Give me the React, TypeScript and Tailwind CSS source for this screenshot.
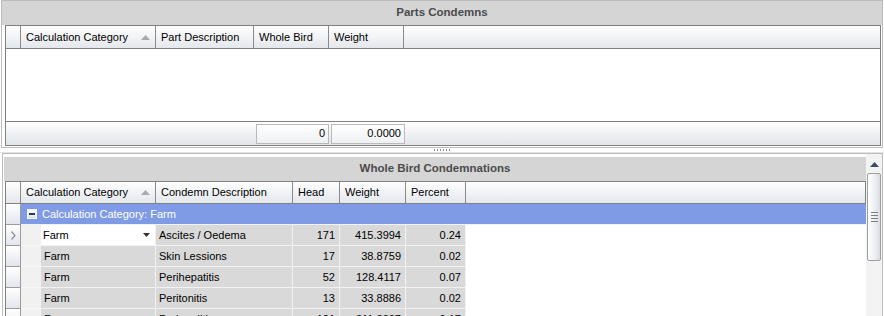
import React from "react";

type Row = { cat: string; desc: string; head: number; weight: string; pct: string };

const rows: Row[] = [
  { cat: "Farm", desc: "Ascites / Oedema", head: 171, weight: "415.3994", pct: "0.24" },
  { cat: "Farm", desc: "Skin Lessions", head: 17, weight: "38.8759", pct: "0.02" },
  { cat: "Farm", desc: "Perihepatitis", head: 52, weight: "128.4117", pct: "0.07" },
  { cat: "Farm", desc: "Peritonitis", head: 13, weight: "33.8886", pct: "0.02" },
  { cat: "Farm", desc: "Pericarditis", head: 121, weight: "311.3307", pct: "0.17" },
];

const hdr = "h-full flex items-center pl-[5px] pr-[4px] border-r border-[#8a8a8a] shrink-0";
const cell = "h-full flex items-center pl-[3px] pr-[4px] border-r border-b border-[#f2f2f2] bg-[#d9d9d9] shrink-0";

function SortUp() {
  return (
    <svg width="9" height="5" viewBox="0 0 9 5" className="ml-auto mr-[1px]">
      <path d="M0 5 L4.5 0 L9 5 Z" fill="#a9a9a9" />
    </svg>
  );
}

function TitleBar({ text }: { text: string }) {
  return (
    <div className="h-[24px] shrink-0 bg-[#d5d5d5] flex items-center justify-center font-bold text-[11.5px] text-[#4b4b4b]">
      {text}
    </div>
  );
}

function Indicator({ arrow }: { arrow?: boolean }) {
  return (
    <div className="w-[15px] h-full shrink-0 border-r border-b border-[#9c9c9c] bg-gradient-to-b from-white to-[#e3e6ec] flex items-center justify-center">
      {arrow && (
        <svg width="5" height="9" viewBox="0 0 5 9">
          <path d="M0.5 0.5 L4 4.5 L0.5 8.5" fill="none" stroke="#8f8f8f" strokeWidth="1.2" />
        </svg>
      )}
    </div>
  );
}

export default function App() {
  return (
    <div className="w-[884px] h-[316px] overflow-hidden bg-white font-['Liberation_Sans',Arial,sans-serif] text-[11px] text-black">
      {/* Parts Condemns */}
      <div className="ml-px w-[882px] h-[148px] border border-[#bcbcbc] flex flex-col pb-px">
        <TitleBar text="Parts Condemns" />
        <div className="ml-[3px] mr-px flex-1 flex flex-col border-x border-[#808080]">
          <div className="h-[24px] shrink-0 flex border-y border-[#808080] bg-gradient-to-b from-white to-[#e4e7ec]">
            <div className="w-[15px] h-full border-r border-[#8a8a8a] shrink-0" />
            <div className={`${hdr} w-[135px]`}>
              Calculation Category
              <SortUp />
            </div>
            <div className={`${hdr} w-[98px]`}>Part Description</div>
            <div className={`${hdr} w-[75px]`}>Whole Bird</div>
            <div className={`${hdr} w-[75px]`}>Weight</div>
          </div>
          <div className="flex-1 bg-white" />
          <div className="h-[25px] shrink-0 flex items-center border-y border-[#808080] bg-gradient-to-b from-white to-[#e1e4e9]">
            <div className="w-[249px] shrink-0" />
            <div className="w-[73px] h-[20px] ml-px border border-[#b9b9b9] bg-gradient-to-b from-white to-[#eef0f3] flex items-center justify-end px-[3px]">
              0
            </div>
            <div className="w-[74px] h-[20px] ml-[2px] border border-[#b9b9b9] bg-gradient-to-b from-white to-[#eef0f3] flex items-center justify-end px-[3px]">
              0.0000
            </div>
          </div>
        </div>
      </div>

      {/* splitter */}
      <div className="h-[5px] flex items-center justify-center gap-[2px] border-b border-[#e2e2e2]">
        {[0, 1, 2, 3, 4, 5].map((i) => (
          <span key={i} className="w-px h-[2px] bg-[#8c8c8c]" />
        ))}
      </div>

      {/* Whole Bird Condemnations */}
      <div className="ml-[2px] w-[881px] h-[170px] border border-[#bcbcbc] flex overflow-hidden">
        <div className="flex-1 pl-px pt-[3px] flex flex-col">
          <TitleBar text="Whole Bird Condemnations" />
          <div className="ml-px flex-1 flex flex-col border-l border-[#808080]">
            <div className="h-[23px] shrink-0 flex border-y border-[#808080] border-r bg-gradient-to-b from-white to-[#e4e7ec]">
              <div className="w-[15px] h-full border-r border-[#8a8a8a] shrink-0" />
              <div className={`${hdr} w-[135px]`}>
                Calculation Category
                <SortUp />
              </div>
              <div className={`${hdr} w-[137px]`}>Condemn Description</div>
              <div className={`${hdr} w-[47px]`}>Head</div>
              <div className={`${hdr} w-[66px]`}>Weight</div>
              <div className={`${hdr} w-[60px]`}>Percent</div>
            </div>

            {/* group row */}
            <div className="h-[21px] flex shrink-0">
              <Indicator />
              <div className="flex-1 h-full bg-[#7f9be6] border-b border-[#f2f2f2] flex items-center pl-[6px] text-white">
                <span className="w-[10px] h-[10px] mr-[5px] border border-[#f4f6fb] bg-gradient-to-b from-white to-[#dfe3ec] flex items-center justify-center">
                  <span className="w-[6px] h-[2px] bg-[#2b3a5e]" />
                </span>
                Calculation Category: Farm
              </div>
            </div>

            {rows.map((r, i) => (
              <div key={i} className="h-[21px] flex shrink-0">
                <Indicator arrow={i === 0} />
                <div className="w-[20px] h-full shrink-0 bg-[#f1f1f1] border-b border-[#f6f6f6]" />
                {i === 0 ? (
                  <div className="w-[115px] h-full shrink-0 flex items-center pl-[2px] pr-[5px] bg-white border-r border-b border-[#f2f2f2]">
                    {r.cat}
                    <svg width="7" height="4" viewBox="0 0 7 4" className="ml-auto">
                      <path d="M0 0 L7 0 L3.5 4 Z" fill="#333" />
                    </svg>
                  </div>
                ) : (
                  <div className={`${cell} w-[115px] pl-[2px]`}>{r.cat}</div>
                )}
                <div className={`${cell} w-[137px]`}>{r.desc}</div>
                <div className={`${cell} w-[47px] justify-end`}>{r.head}</div>
                <div className={`${cell} w-[66px] justify-end`}>{r.weight}</div>
                <div className={`${cell} w-[60px] justify-end`}>{r.pct}</div>
              </div>
            ))}
          </div>
        </div>

        {/* scrollbar */}
        <div className="w-[16px] bg-[#f3f3f3] flex flex-col items-center pt-[8px] shrink-0">
          <svg width="9" height="5" viewBox="0 0 9 5">
            <path d="M0 5 L4.5 0 L9 5 Z" fill="#3c4a6e" />
          </svg>
          <div className="mt-[6px] w-[14px] h-[88px] shrink-0 rounded-[2px] border border-[#9f9f9f] bg-gradient-to-r from-white via-[#f1f2f4] to-[#d9dce2] flex flex-col items-center justify-center gap-[2px]">
            <span className="w-[7px] h-px bg-[#7d7d7d]" />
            <span className="w-[7px] h-px bg-[#7d7d7d]" />
            <span className="w-[7px] h-px bg-[#7d7d7d]" />
            <span className="w-[7px] h-px bg-[#7d7d7d]" />
          </div>
        </div>
      </div>
    </div>
  );
}
